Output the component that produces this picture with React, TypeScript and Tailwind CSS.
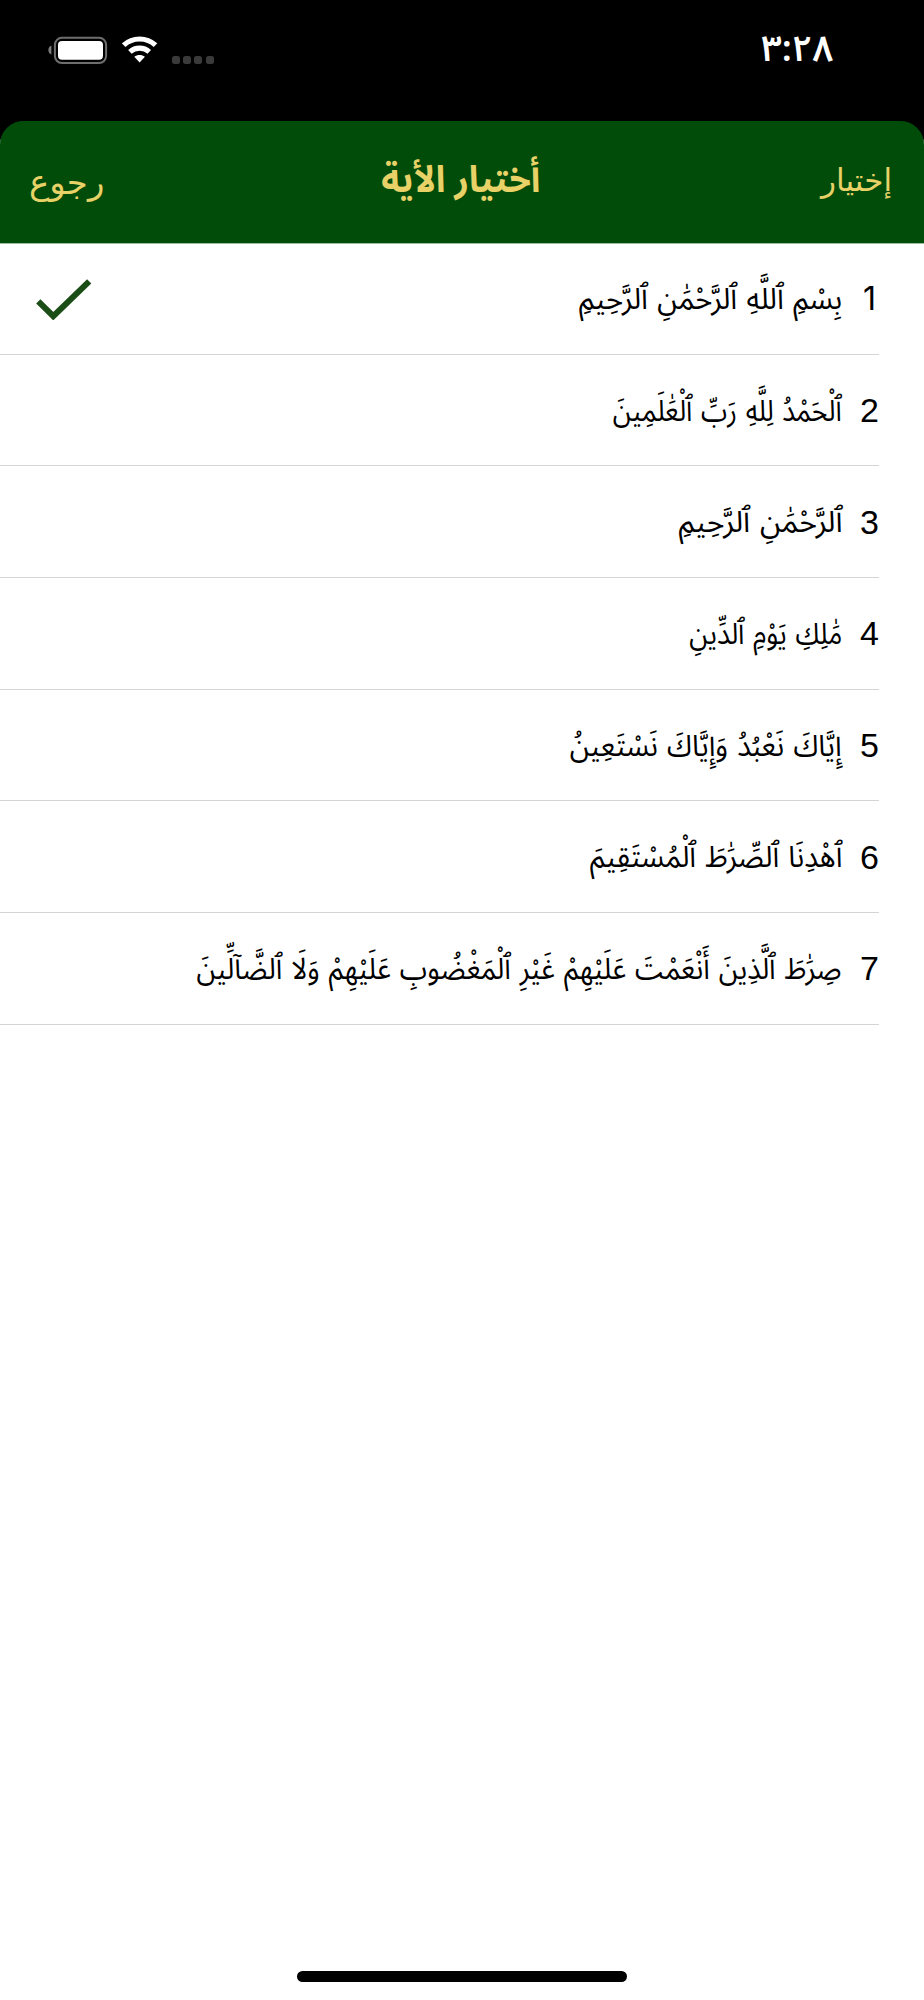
import React from "react";

const ARABIC = "font-['Noto_Sans_Arabic','Noto_Naskh_Arabic','Liberation_Sans',sans-serif]";

const verses = [
  { text: "بِسْمِ ٱللَّهِ ٱلرَّحْمَٰنِ ٱلرَّحِيمِ", fit: "scale-x-[0.967]", selected: true },
  { text: "ٱلْحَمْدُ لِلَّهِ رَبِّ ٱلْعَٰلَمِينَ", fit: "scale-x-[0.885]" },
  { text: "ٱلرَّحْمَٰنِ ٱلرَّحِيمِ", fit: "scale-x-[1.002]" },
  { text: "مَٰلِكِ يَوْمِ ٱلدِّينِ", fit: "scale-x-[0.893]" },
  { text: "إِيَّاكَ نَعْبُدُ وَإِيَّاكَ نَسْتَعِينُ", fit: "scale-x-[0.942]" },
  { text: "ٱهْدِنَا ٱلصِّرَٰطَ ٱلْمُسْتَقِيمَ", fit: "scale-x-[0.947]" },
  {
    text: "صِرَٰطَ ٱلَّذِينَ أَنْعَمْتَ عَلَيْهِمْ غَيْرِ ٱلْمَغْضُوبِ عَلَيْهِمْ وَلَا ٱلضَّآلِّينَ",
    fit: "scale-x-[0.922]",
  },
];

function Battery() {
  return (
    <svg width="60" height="28" viewBox="0 0 60 28" aria-hidden="true">
      <path d="M3.4 9.6C1.4 10.4 0.4 12 0.4 14s1 3.6 3 4.4z" fill="#7d7d7d" />
      <rect x="6.9" y="1.8" width="51.2" height="25.2" rx="7" fill="none" stroke="#6e6e6e" strokeWidth="2" />
      <rect x="10" y="5" width="45" height="18.8" rx="4" fill="#fff" />
    </svg>
  );
}

function Wifi() {
  return (
    <svg width="36" height="27" viewBox="0 0 36 27" aria-hidden="true">
      <g fill="none" stroke="#fff" strokeWidth="5.2">
        <path d="M1.7 9.2C10.6 0.9 24.6 0.9 33.5 9.2" />
        <path d="M7.9 15.9C13.4 10.9 21.8 10.9 27.3 15.9" />
      </g>
      <path d="M12.3 20.8C15.4 18.3 19.8 18.3 22.9 20.8L17.6 26.4z" fill="#fff" />
    </svg>
  );
}

export default function App() {
  return (
    <div className="flex h-[2000px] w-[924px] flex-col overflow-hidden bg-black">
      <div className="flex h-[121px] shrink-0 items-start justify-between pl-12 pr-[91px] pt-9">
        <div className="flex items-start">
          <Battery />
          <div className="ml-[14px]">
            <Wifi />
          </div>
          <div className="ml-[14px] flex gap-[3.2px] pt-5">
            {[0, 1, 2, 3].map((dot) => (
              <span key={dot} className="h-2 w-2 rounded-[2.5px] bg-[#3a3a3a]" />
            ))}
          </div>
        </div>
        <div className={`${ARABIC} h-[30px] text-[36px] leading-[28px] font-semibold text-white`}>٣:٢٨</div>
      </div>

      <div className="flex grow flex-col overflow-hidden rounded-t-[24px] bg-linear-to-b from-[#024c0a] from-[100px] to-white to-[100px]">
        <header
          dir="rtl"
          className="grid h-[122.2px] shrink-0 grid-cols-3 items-center bg-[#024c0a] pl-[29px] pr-8 text-[#e8d267] shadow-[0_1px_0_#9dbf9f]"
        >
          <button className="pb-1 text-right font-['DejaVu_Sans',sans-serif] text-[31px] leading-[40px]">إختيار</button>
          <h1 className={`${ARABIC} origin-center scale-x-[0.95] pb-[5px] text-center text-[37px] leading-[44px] font-bold`}>
            أختيار الأية
          </h1>
          <button className="text-left font-['DejaVu_Sans',sans-serif] text-[34px] leading-[40px]">رجوع</button>
        </header>

        <ul dir="rtl">
          {verses.map((verse, index) => (
            <li
              key={index}
              className="mr-[45px] flex h-[111.65px] items-center border-b border-[#d4d4d6] text-black"
            >
              <span
                className={
                  index === 0
                    ? "w-[37px] pr-[3px] font-['Inter',sans-serif] text-[32px] leading-[40px]"
                    : "w-[37px] font-['Liberation_Sans',sans-serif] text-[34px] leading-[40px]"
                }
              >
                {index + 1}
              </span>
              <span
                className={`${ARABIC} ${verse.fit} origin-right pt-[3px] whitespace-nowrap text-[30px] leading-[44px] [word-spacing:2px]`}
              >
                {verse.text}
              </span>
              {verse.selected && (
                <svg className="mr-auto ml-9" width="56" height="42" viewBox="0 0 56 42" aria-hidden="true">
                  <path d="M2.3 23.3L17.3 38.2L53.2 3.3" fill="none" stroke="#1b4e17" strokeWidth="6" />
                </svg>
              )}
            </li>
          ))}
        </ul>

        <div className="mt-auto mb-[18px] h-[11px] w-[330px] self-center rounded-full bg-black" />
      </div>
    </div>
  );
}
